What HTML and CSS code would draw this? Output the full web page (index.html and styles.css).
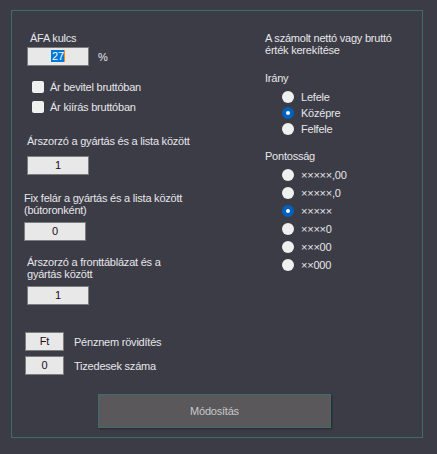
FILE: index.html
```html
<!DOCTYPE html>
<html>
<head>
<meta charset="utf-8">
<link rel="stylesheet" href="styles.css">
</head>
<body>
<div class="panel">
  <div class="columns">
    <div class="col-left">
      <div class="label ind18">ÁFA kulcs</div>
      <div class="row vat-row ind15">
        <div class="field w62"><span class="sel">27</span></div>
        <span class="unit">%</span>
      </div>
      <div class="check-row first ind20"><span class="check"></span><span>Ár bevitel bruttóban</span></div>
      <div class="check-row second ind20"><span class="check"></span><span>Ár kiírás bruttóban</span></div>
      <div class="label gap22 ind15">Árszorzó a gyártás és a lista között</div>
      <div class="field w62 gap9 ind15">1</div>
      <div class="label gap17 ind12">Fix felár a gyártás és a lista között<br>(bútoronként)</div>
      <div class="field w62 gap6 ind12">0</div>
      <div class="label gap15 ind15">Árszorzó a fronttáblázat és a<br>gyártás között</div>
      <div class="field w62 gap6 ind15">1</div>
    </div>
    <div class="col-right">
      <div class="label">A számolt nettó vagy bruttó<br>érték kerekítése</div>
      <div class="label gap16">Irány</div>
      <div class="radios tight">
        <div class="radio-row"><span class="radio"></span><span>Lefele</span></div>
        <div class="radio-row"><span class="radio on"></span><span>Középre</span></div>
        <div class="radio-row"><span class="radio"></span><span>Felfele</span></div>
      </div>
      <div class="label gap15">Pontosság</div>
      <div class="radios wide">
        <div class="radio-row"><span class="radio"></span><span>×××××,00</span></div>
        <div class="radio-row"><span class="radio"></span><span>×××××,0</span></div>
        <div class="radio-row"><span class="radio on"></span><span>×××××</span></div>
        <div class="radio-row"><span class="radio"></span><span>××××0</span></div>
        <div class="radio-row"><span class="radio"></span><span>×××00</span></div>
        <div class="radio-row"><span class="radio"></span><span>××000</span></div>
      </div>
    </div>
  </div>
  <div class="row small-row gap27"><div class="field w39">Ft</div><span>Pénznem rövidítés</span></div>
  <div class="row small-row gap5"><div class="field w39">0</div><span>Tizedesek száma</span></div>
  <button class="btn">Módosítás</button>
</div>
</body>
</html>
```

FILE: styles.css
```css
html, body {
  margin: 0;
  padding: 0;
  background: #3c3c46;
}
body {
  font-family: "Liberation Sans", Arial, sans-serif;
  font-size: 11px;
  line-height: 12px;
  letter-spacing: -0.22px;
  color: #e6e6ea;
}
.panel {
  box-sizing: border-box;
  width: 412px;
  margin: 10px 0 0 11px;
  border: 1px solid #3f6e6a;
  padding: 21px 0 9px 0;
  display: flex;
  flex-direction: column;
  align-items: flex-start;
}
.columns {
  display: flex;
  align-self: stretch;
}
.col-left {
  width: 241px;
  display: flex;
  flex-direction: column;
  align-items: flex-start;
}
.col-right {
  padding-left: 12px;
  display: flex;
  flex-direction: column;
  align-items: flex-start;
}
.ind12 { margin-left: 12px; }
.ind15 { margin-left: 15px; }
.ind18 { margin-left: 18px; }
.ind20 { margin-left: 20px; }
.gap5 { margin-top: 5px; }
.gap6 { margin-top: 6px; }
.gap9 { margin-top: 9px; }
.gap15 { margin-top: 15px; }
.gap16 { margin-top: 16px; }
.gap17 { margin-top: 17px; }
.gap22 { margin-top: 22px; }
.gap27 { margin-top: 27px; }

.row {
  display: flex;
  align-items: center;
}
.vat-row { margin-top: 3px; }
.unit { margin-left: 9px; }

.field {
  box-sizing: border-box;
  height: 19px;
  background: #e8e8e8;
  border: 1px solid #7c7c7c;
  color: #240a22;
  text-align: center;
  line-height: 17px;
}
.w62 { width: 62px; }
.w39 { width: 39px; }
.sel {
  display: inline-block;
  line-height: 12px;
  background: #0078d7;
  color: #ffffff;
  padding: 0 0 0 1px;
  border-right: 1px solid #ff8c00;
  vertical-align: middle;
  margin-top: -2px;
}

.check-row {
  display: flex;
  align-items: center;
  height: 12px;
  gap: 6px;
}
.check-row.first { margin-top: 15px; }
.check-row.second { margin-top: 8px; }
.check {
  width: 12px;
  height: 12px;
  border-radius: 2px;
  background: #f0f0f0;
  flex: none;
}

.radios {
  display: flex;
  flex-direction: column;
  margin-top: 7px;
  margin-left: 17px;
}
.radios.tight { gap: 4px; }
.radios.wide { gap: 6px; }
.radio-row {
  display: flex;
  align-items: center;
  height: 12px;
  gap: 7px;
}
.radio {
  box-sizing: border-box;
  width: 12px;
  height: 12px;
  border-radius: 50%;
  background: #f0f0f0;
  flex: none;
}
.radio.on {
  background: #ffffff;
  border: 4px solid #0062be;
}

.small-row {
  margin-left: 13px;
  gap: 10px;
}

.btn {
  box-sizing: border-box;
  margin: 19px 0 0 86px;
  width: 233px;
  height: 34px;
  background: #5a585b;
  border: 1px solid #3f6e6a;
  box-shadow: 1px 1px 2px rgba(0, 0, 0, 0.35);
  color: #c8c8cc;
  font-family: "Liberation Sans", Arial, sans-serif;
  font-size: 11px;
  letter-spacing: -0.22px;
  padding: 0;
}
```
